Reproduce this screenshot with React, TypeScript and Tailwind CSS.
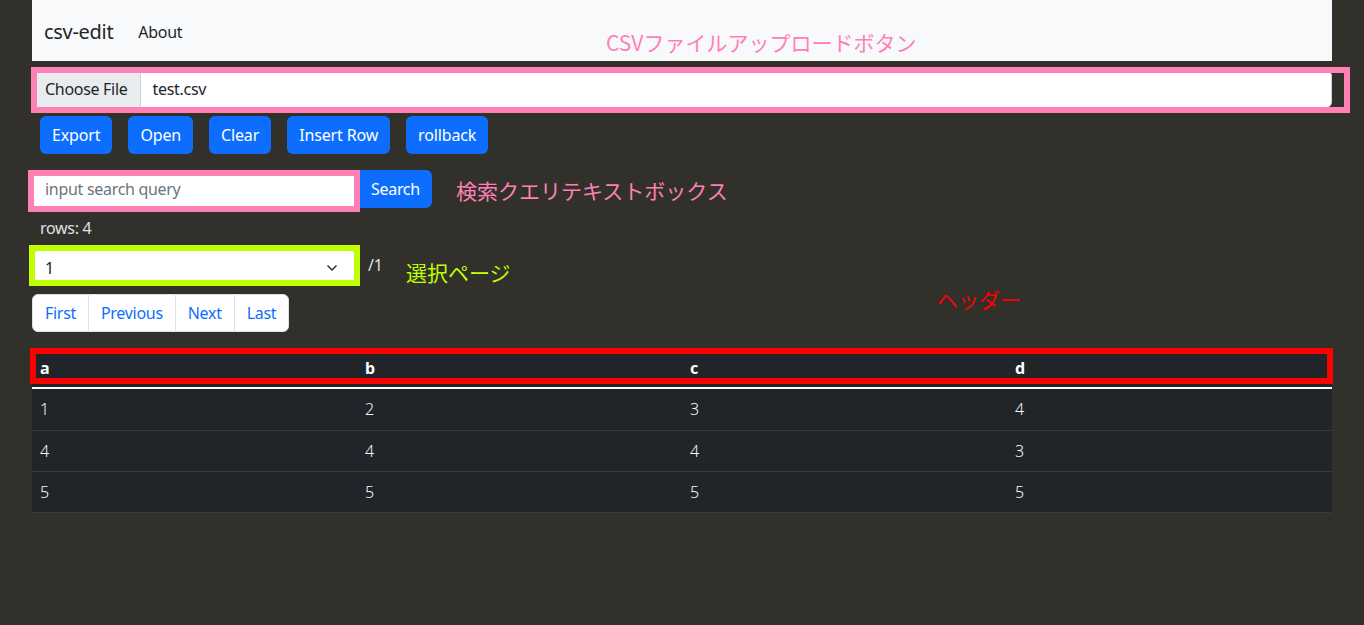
import { ChevronDown } from "lucide-react";

const rows = [
  ["1", "2", "3", "4"],
  ["4", "4", "4", "3"],
  ["5", "5", "5", "5"],
];

const actions = ["Export", "Open", "Clear", "Insert Row", "rollback"];
const pages = ["First", "Previous", "Next", "Last"];

export default function App() {
  return (
    <div
      className="relative min-h-[625px] bg-[#32302b] text-base tracking-[-0.3px] text-[#dee2e6]"
      style={{ fontFamily: '"Noto Sans", "Open Sans", sans-serif' }}
    >
      <div className="mx-auto w-[1300px]">
        <nav className="flex h-[61px] items-center bg-[#f8f9fa] px-3 pt-[2px]">
          <span className="mr-[25px] text-[20px] text-[#212529]">csv-edit</span>
          <span className="text-[16px] text-[#212529]">About</span>
        </nav>

        <div className="mt-[9px] flex h-[38px] overflow-hidden rounded-md border border-[#ced4da] bg-white text-[#212529]">
          <span className="flex items-center border-r border-[#ced4da] bg-[#e9ecef] px-3">
            Choose File
          </span>
          <span className="flex items-center pl-3">test.csv</span>
        </div>

        <div className="flex">
          {actions.map((a) => (
            <button
              key={a}
              className="m-2 h-[38px] rounded-md bg-[#0d6efd] px-3 tracking-[-0.15px] text-white"
            >
              {a}
            </button>
          ))}
        </div>

        <div className="mt-2 flex h-[38px]">
          <div className="flex w-[325px] items-center rounded-l-md border border-[#ced4da] bg-white px-3 text-[#6c757d]">
            input search query
          </div>
          <button className="rounded-r-md bg-[#0d6efd] px-3 pl-[14px] text-white">
            Search
          </button>
        </div>

        <div className="mt-2 h-6 pl-2 leading-6">rows: 4</div>

        <div className="mt-[10px] flex items-center">
          <div className="flex h-[36px] w-[325px] items-center justify-between rounded-md border border-[#ced4da] bg-white pr-4 pl-3 text-[#212529]">
            <span>1</span>
            <ChevronDown className="h-4 w-4 text-[#343a40]" strokeWidth={2.5} />
          </div>
          <span className="ml-[11px] -mt-[6px]">/1</span>
        </div>

        <div className="mt-[8px] flex w-max overflow-hidden rounded-md border border-[#dee2e6] bg-white text-[#0d6efd]">
          {pages.map((p, i) => (
            <span
              key={p}
              className={`flex h-[36px] items-center px-3 ${
                i > 0 ? "border-l border-[#dee2e6]" : ""
              }`}
            >
              {p}
            </span>
          ))}
        </div>

        <table className="mt-[16px] w-full table-fixed border-collapse bg-[#212529] text-white">
          <thead>
            <tr className="border-b-2 border-white">
              {["a", "b", "c", "d"].map((h) => (
                <th key={h} className="h-[40px] px-2 text-left font-bold">
                  {h}
                </th>
              ))}
            </tr>
          </thead>
          <tbody>
            {rows.map((r, i) => (
              <tr key={i} className="border-b border-[#373b3e]">
                {r.map((c, j) => (
                  <td
                    key={j}
                    className={`${i === 0 ? "h-[42px]" : "h-[41px]"} px-2 font-light text-[#f8f9fa]`}
                  >
                    {c}
                  </td>
                ))}
              </tr>
            ))}
          </tbody>
        </table>
      </div>

      {/* annotations drawn over the page */}
      <div
        className="pointer-events-none absolute inset-0 tracking-normal"
        style={{ fontFamily: '"Noto Sans CJK JP", serif' }}
      >
        <div className="absolute top-[67px] left-[31px] h-[46px] w-[1319px] border-[6px] border-[#ff80b5]" />
        <div className="absolute top-[170px] left-[28px] h-[42px] w-[332px] border-[6px] border-[#ff80b5]" />
        <div className="absolute top-[245px] left-[29px] h-[41px] w-[331px] border-[6px] border-[#bfff00]" />
        <div className="absolute top-[348px] left-[30px] h-[36px] w-[1303px] border-[6px] border-[#ff0000]" />

        <span className="absolute top-[28px] left-[606px] text-[21px] leading-[28px] text-[#ff80b5]">
          CSVファイルアップロードボタン
        </span>
        <span className="absolute top-[175px] left-[456px] text-[21px] leading-[30px] text-[#ff80b5]">
          検索クエリテキストボックス
        </span>
        <span className="absolute top-[257px] left-[406px] text-[21px] leading-[30px] text-[#bfff00]">
          選択ページ
        </span>
        <span className="absolute top-[285px] left-[937px] text-[21px] leading-[28px] text-[#ff0000]">
          ヘッダー
        </span>
      </div>
    </div>
  );
}
